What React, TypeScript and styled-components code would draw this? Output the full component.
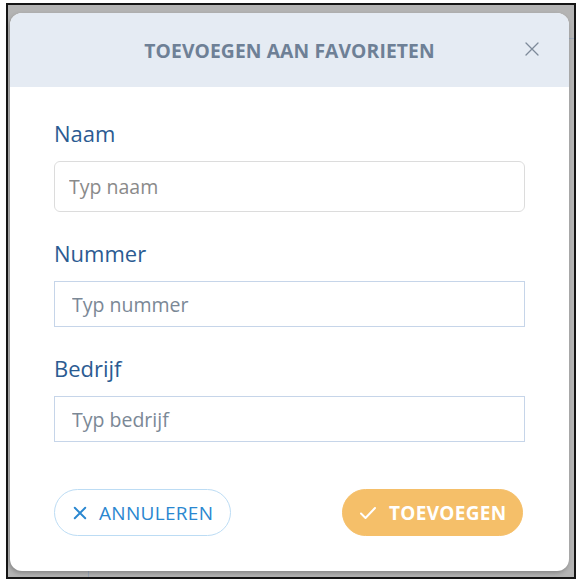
import React from 'react';
import { styled, createGlobalStyle } from 'styled-components';

const Global = createGlobalStyle`
  html, body { margin: 0; padding: 0; background: #fff; }
  * { box-sizing: border-box; }
  body { font-family: "Open Sans", "Noto Sans", sans-serif; }
`

const Frame = styled.div`
  position: relative;
  margin: 3px 0 0 6px;
  width: 570px;
  height: 576px;
  border: 2px solid #151515;
  background: #b4b4b4;
  padding: 8px 5px 6px 2px;
`

const BackLine = styled.div<{ $v?: boolean }>`
  position: absolute;
  background: #9aa7b8;
  ${p => p.$v
    ? 'left: 80px; bottom: 0; width: 1px; height: 7px;'
    : 'right: 0; top: 33px; width: 5px; height: 1px;'}
`

const Modal = styled.div`
  position: relative;
  height: 100%;
  background: #fff;
  border-radius: 12px;
  overflow: hidden;
  display: flex;
  flex-direction: column;
  box-shadow: -1px 2px 4px rgba(0, 0, 0, 0.25);
`

const Header = styled.header`
  height: 74px;
  flex: none;
  background: #e5ebf3;
  display: flex;
  align-items: center;
  justify-content: center;
  position: relative;
`

const Title = styled.h2`
  margin: 0;
  font-size: 19.3px;
  font-weight: 700;
  color: #6e8096;
  letter-spacing: 0.1px;
`

const Close = styled.button`
  position: absolute;
  right: 28px;
  top: 27px;
  width: 18px;
  height: 18px;
  padding: 0;
  border: 0;
  background: none;
  display: flex;
  align-items: center;
  justify-content: center;
  color: #6e8096;
`

const Body = styled.div`
  padding: 30px 44px 0;
  display: flex;
  flex-direction: column;
`

const Field = styled.div`
  display: flex;
  flex-direction: column;
  margin-bottom: 25px;
`

const Label = styled.label`
  font-size: 22px;
  color: #2b5b92;
  line-height: 32px;
  margin-bottom: 12px;
`

const Input = styled.input<{ $rounded?: boolean }>`
  width: 100%;
  height: ${p => (p.$rounded ? '51px' : '46px')};
  border: 1px solid ${p => (p.$rounded ? '#dcdcdc' : '#c6d5e9')};
  border-radius: ${p => (p.$rounded ? '6px' : '0')};
  padding: 0 ${p => (p.$rounded ? '14px' : '17px')};
  font-family: inherit;
  font-size: 19.5px;
  color: #333;
  outline: none;
  &::placeholder { color: ${p => (p.$rounded ? '#8a8a8a' : '#7b8896')}; }
`

const Actions = styled.div`
  display: flex;
  justify-content: space-between;
  margin-top: 22px;
  padding-right: 2px;
`

const Button = styled.button<{ $primary?: boolean }>`
  height: 47px;
  border-radius: 24px;
  display: flex;
  align-items: center;
  gap: 12px;
  font-family: inherit;
  font-size: 19px;
  letter-spacing: 0.3px;
  cursor: pointer;
  ${p => p.$primary
    ? `
      background: #f5bf69;
      border: 1px solid #f5bf69;
      color: #fff;
      font-weight: 700;
      padding: 0 0 0 16px;
      width: 181px;
    `
    : `
      background: #fff;
      border: 1px solid #bcdcf4;
      color: #2a87d0;
      font-weight: 400;
      padding: 0 0 0 18px;
      width: 177px;
    `}
`

const XIcon = ({ size, w, color }: { size: number; w: number; color: string }) => (
  <svg width={size} height={size} viewBox="0 0 16 16" fill="none">
    <path d="M2 2 L14 14 M14 2 L2 14" stroke={color} strokeWidth={w} strokeLinecap="round" />
  </svg>
)

const Check = () => (
  <svg width="18" height="14" viewBox="0 0 18 14" fill="none">
    <path d="M2 7.5 L6.5 12 L16 2" stroke="#fff" strokeWidth="2" strokeLinecap="round" strokeLinejoin="round" />
  </svg>
)

const fields = [
  { label: 'Naam', placeholder: 'Typ naam', rounded: true },
  { label: 'Nummer', placeholder: 'Typ nummer' },
  { label: 'Bedrijf', placeholder: 'Typ bedrijf' },
]

export default function App() {
  return (
    <>
      <Global />
      <Frame>
        <BackLine />
        <BackLine $v />
        <Modal>
          <Header>
            <Title>TOEVOEGEN AAN FAVORIETEN</Title>
            <Close aria-label="Sluiten">
              <XIcon size={16} w={1.3} color="#7d8a99" />
            </Close>
          </Header>
          <Body>
            {fields.map(f => (
              <Field key={f.label}>
                <Label>{f.label}</Label>
                <Input $rounded={f.rounded} placeholder={f.placeholder} />
              </Field>
            ))}
            <Actions>
              <Button>
                <XIcon size={14} w={2.2} color="#2a87d0" />
                ANNULEREN
              </Button>
              <Button $primary>
                <Check />
                TOEVOEGEN
              </Button>
            </Actions>
          </Body>
        </Modal>
      </Frame>
    </>
  )
}
